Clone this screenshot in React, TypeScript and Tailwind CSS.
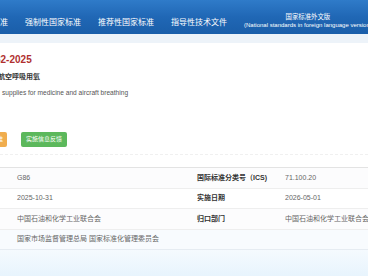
export default function App() {
  const font = { fontFamily: '"Liberation Sans", Arial, "Noto Sans CJK SC", sans-serif' };
  return (
    <div className="w-[368px] h-[276px] overflow-hidden bg-white flex flex-col" style={font}>
      {/* header */}
      <div className="h-[34px] shrink-0 bg-gradient-to-b from-[#2f7bc9] via-[#2067b5] to-[#1a5ea9] flex items-end">
        <div className="h-[26px] w-full flex items-center text-white text-[8px] leading-none whitespace-nowrap">
          <div className="flex items-center gap-[17px] ml-[-8px] mt-[3px]">
            <span>标准</span>
            <span>强制性国家标准</span>
            <span>推荐性国家标准</span>
            <span>指导性技术文件</span>
          </div>
          <div className="ml-[17px] flex flex-col items-center mt-[-2px]">
            <span className="text-[6.4px] leading-[9px]">国家标准外文版</span>
            <span className="text-[6px] leading-[8px]">(National standards in foreign language version)</span>
          </div>
        </div>
      </div>
      {/* light strip */}
      <div className="h-[9px] shrink-0 bg-[#edf3f9]" />
      {/* content */}
      <div className="flex flex-col bg-white">
        <div className="mt-[11px] ml-[-5px] text-[10px] leading-[12px] font-bold text-[#b03030] whitespace-nowrap">82-2025</div>
        <div className="mt-[6px] ml-[-2px] text-[7px] leading-[10px] font-bold text-[#333] whitespace-nowrap">航空呼吸用氧</div>
        <div className="mt-[6px] ml-[2px] text-[6.6px] leading-[10px] text-[#555] whitespace-nowrap">supplies for medicine and aircraft breathing</div>
        <div className="mt-[34px] flex items-center gap-[14px] ml-[-13px]">
          <div className="h-[15px] px-[4px] bg-[#f0ad4e] text-white text-[6px] flex items-center rounded-[2px] whitespace-nowrap">标准</div>
          <div className="h-[15px] px-[5px] bg-[#5cb85c] text-white text-[6px] flex items-center rounded-[2px] whitespace-nowrap">实施信息反馈</div>
        </div>
        <div className="mt-[7px] border-t border-dashed border-[#f0f0f0]" />
        <div className="mt-[12px] border-t border-[#e3e3e3] text-[7px] text-[#666]">
          <div className="h-[21px] grid grid-cols-[180px_88px_1fr] items-center border-b border-[#eeeeee] bg-[#fcfcfd] pl-[17px]">
            <span>G86</span>
            <span className="font-bold text-[#333]">国际标准分类号（ICS)</span>
            <span>71.100.20</span>
          </div>
          <div className="h-[20px] grid grid-cols-[180px_88px_1fr] items-center border-b border-[#eeeeee] pl-[17px]">
            <span>2025-10-31</span>
            <span className="font-bold text-[#333]">实施日期</span>
            <span>2026-05-01</span>
          </div>
          <div className="h-[21px] grid grid-cols-[180px_88px_1fr] items-center border-b border-[#eeeeee] bg-[#fcfcfd] pl-[17px]">
            <span>中国石油和化学工业联合会</span>
            <span className="font-bold text-[#333]">归口部门</span>
            <span className="whitespace-nowrap">中国石油和化学工业联合会</span>
          </div>
          <div className="h-[20px] flex items-center border-b border-[#e6ecf2] bg-[#f8fbfe] pl-[17px]">
            <span>国家市场监督管理总局 国家标准化管理委员会</span>
          </div>
        </div>
      </div>
      <div className="flex-1 bg-gradient-to-b from-[#f5fafe] to-[#e8f4fd]" />
    </div>
  );
}
